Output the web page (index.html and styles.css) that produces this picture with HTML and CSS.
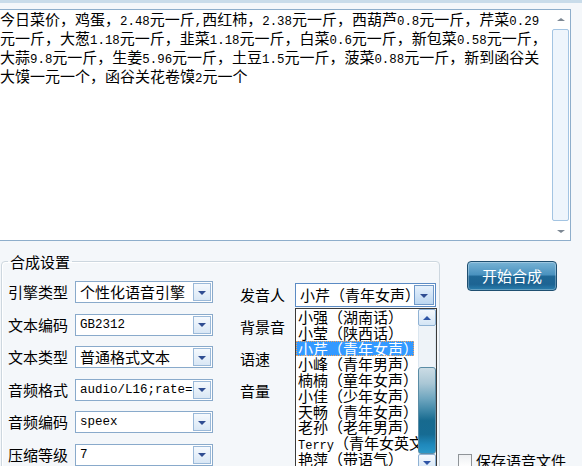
FILE: index.html
```html
<!DOCTYPE html>
<html lang="zh">
<head>
<meta charset="utf-8">
<title>合成设置</title>
<link rel="stylesheet" href="styles.css">
</head>
<body>
<div class="topband"></div>
<div class="editor">
  <div class="editor-text">今日菜价，鸡蛋，<span class="n">2.48</span>元一斤<span class="n">,</span>西红柿，<span class="n">2.38</span>元一斤，西葫芦<span class="n">0.8</span>元一斤，芹菜<span class="n">0.29</span><br>元一斤，大葱<span class="n">1.18</span>元一斤，韭菜<span class="n">1.18</span>元一斤，白菜<span class="n">0.6</span>元一斤，新包菜<span class="n">0.58</span>元一斤，<br>大蒜<span class="n">9.8</span>元一斤，生姜<span class="n">5.96</span>元一斤，土豆<span class="n">1.5</span>元一斤，菠菜<span class="n">0.88</span>元一斤，新到函谷关<br>大馍一元一个，函谷关花卷馍<span class="n">2</span>元一个</div>
  <div class="vscroll">
    <div class="vs-arrow vs-up"></div>
    <div class="vs-thumb"></div>
    <div class="vs-arrow vs-down"></div>
  </div>
</div>
<div class="bottom">
  <fieldset class="group">
    <legend>合成设置</legend>
    <div class="group-body">
      <div class="params">
        <span class="lbl">引擎类型</span>
        <div class="combo"><span class="val">个性化语音引擎</span><span class="dd"></span></div>
        <span class="lbl">文本编码</span>
        <div class="combo"><span class="val mono">GB2312</span><span class="dd"></span></div>
        <span class="lbl">文本类型</span>
        <div class="combo"><span class="val">普通格式文本</span><span class="dd"></span></div>
        <span class="lbl">音频格式</span>
        <div class="combo"><span class="val mono">audio/L16;rate=16000</span><span class="dd"></span></div>
        <span class="lbl">音频编码</span>
        <div class="combo"><span class="val mono">speex</span><span class="dd"></span></div>
        <span class="lbl">压缩等级</span>
        <div class="combo"><span class="val mono">7</span><span class="dd"></span></div>
      </div>
      <div class="voice">
        <span class="lbl">发音人</span>
        <div class="combo combo-open"><span class="val">小芹（青年女声）</span><span class="dd"></span></div>
        <span class="lbl">背景音</span><span></span>
        <span class="lbl">语速</span><span></span>
        <span class="lbl">音量</span><span></span>
      </div>
    </div>
  </fieldset>
  <div class="side">
    <button class="start" type="button">开始合成</button>
    <label class="save"><span class="box"></span>保存语音文件</label>
  </div>
  <div class="droplist">
    <ul class="items">
      <li>小强（湖南话）</li>
      <li>小莹（陕西话）</li>
      <li class="sel">小芹（青年女声）</li>
      <li>小峰（青年男声）</li>
      <li>楠楠（童年女声）</li>
      <li>小佳（少年女声）</li>
      <li>天畅（青年女声）</li>
      <li>老孙（老年男声）</li>
      <li><span class="mono-s">Terry</span>（青年女英文）</li>
      <li>艳萍（带语气）</li>
    </ul>
    <div class="lscroll">
      <div class="lbtn lup"></div>
      <div class="ltrack"></div>
      <div class="lthumb"></div>
      <div class="lbtn ldown"></div>
    </div>
  </div>
</div>
</body>
</html>
```
FILE: styles.css
```css
html, body {
  margin: 0;
  padding: 0;
  width: 582px;
  height: 466px;
  overflow: hidden;
}
body {
  background: #f4f7fa;
  font-family: "Noto Sans CJK SC", "Noto Sans", sans-serif;
  font-size: 15px;
  color: #000;
}
.topband {
  height: 3px;
  background: #c9dcea;
}
.editor {
  margin: 6px 0 0 -2px;
  width: 573px;
  height: 232px;
  box-sizing: border-box;
  border: 1px solid #8eaecb;
  background: #fff;
  display: flex;
}
.editor-text {
  flex: 1;
  min-width: 0;
  padding: 1px 0 0 1px;
  line-height: 15px;
  white-space: nowrap;
}
.n {
  font-family: "Liberation Mono", monospace;
  font-size: 12.4px;
}
.vscroll {
  width: 19px;
  flex: none;
  display: flex;
  flex-direction: column;
  background: #fff;
}
.vs-arrow {
  height: 18px;
  display: flex;
  align-items: center;
  justify-content: center;
}
.vs-up::after {
  content: "";
  border-left: 4px solid transparent;
  border-right: 4px solid transparent;
  border-bottom: 3px solid #7d8894;
}
.vs-down::after {
  content: "";
  border-left: 4px solid transparent;
  border-right: 4px solid transparent;
  border-top: 3px solid #7d8894;
}
.vs-thumb {
  flex: 1;
  margin: 1px 1px;
  border: 1px solid #a3c4e2;
  border-radius: 2px;
  background: #eef5fc;
}
.bottom {
  position: relative;
  display: flex;
  padding-top: 12px;
}
.group {
  margin: 0 0 0 1px;
  padding: 11px 2px 0 6px;
  width: 439px;
  height: 260px;
  box-sizing: border-box;
  border: 1px solid #cdd7df;
  border-radius: 4px;
  box-shadow: inset 1px 1px 0 #fff;
  min-width: 0;
}
.group legend {
  padding: 0 2px;
  line-height: 17px;
  font-size: 15px;
}
.group-body {
  display: flex;
}
.params {
  display: grid;
  grid-template-columns: 67px 138px;
  grid-auto-rows: 22px;
  row-gap: 10.6px;
  align-items: center;
}
.voice {
  display: grid;
  grid-template-columns: 55px 141px;
  grid-template-rows: 24px 24px 24px 24px;
  row-gap: 8px;
  align-items: center;
  margin: 2px 0 0 27px;
  align-self: flex-start;
}
.lbl {
  line-height: 18px;
  white-space: nowrap;
}
.combo {
  height: 22px;
  box-sizing: border-box;
  border: 1px solid #89aacb;
  background: #fff;
  display: flex;
  align-items: center;
  padding-left: 4px;
}
.val {
  flex: 1;
  overflow: hidden;
  white-space: nowrap;
  line-height: 18px;
}
.mono {
  font-family: "Liberation Mono", monospace;
  font-size: 12.5px;
}
.mono-s {
  font-family: "Liberation Mono", monospace;
  font-size: 12px;
}
.dd {
  width: 18px;
  height: 18px;
  margin-right: 1px;
  box-sizing: border-box;
  border: 1px solid #9ab9d9;
  background: linear-gradient(#f5f9fd, #d9e7f5);
  display: flex;
  align-items: center;
  justify-content: center;
  flex: none;
}
.dd::after {
  content: "";
  margin-top: 1px;
  border-left: 4.5px solid transparent;
  border-right: 4.5px solid transparent;
  border-top: 4px solid #2f4d92;
}
.combo-open {
  height: 24px;
  border-color: #5b8bc4;
}
.combo-open .dd {
  width: 20px;
  height: 20px;
  border-color: #6f98c8;
  background: linear-gradient(#e6f1fc, #bcd7f1);
}
.side {
  display: flex;
  flex-direction: column;
  align-items: flex-start;
}
.start {
  margin: 8px 0 0 27px;
  width: 90px;
  height: 30px;
  border: 1px solid #1f4f70;
  border-radius: 4px;
  background: linear-gradient(#78b3d5 0%, #4a92bf 45%, #1f6795 52%, #1d6493 80%, #2a7fae 100%);
  box-shadow: inset 0 0 0 1px rgba(255, 255, 255, 0.28);
  color: #fff;
  font-family: "Noto Sans CJK SC", sans-serif;
  font-size: 15px;
  line-height: 20px;
  padding: 0;
}
.save {
  margin: 162px 0 0 18px;
  display: flex;
  align-items: center;
  white-space: nowrap;
  line-height: 16px;
}
.box {
  width: 14px;
  height: 14px;
  box-sizing: border-box;
  border: 1px solid #8f9498;
  background: linear-gradient(#eef0f2, #fff);
  margin-right: 4px;
}
.droplist {
  position: absolute;
  left: 295px;
  top: 67px;
  width: 142px;
  height: 175px;
  box-sizing: border-box;
  border: 1px solid #3a3a3a;
  background: #fff;
  display: flex;
}
.items {
  flex: 1;
  min-width: 0;
  margin: 0;
  padding: 0;
  list-style: none;
  overflow: hidden;
}
.items li {
  height: 15.75px;
  line-height: 15.75px;
  padding-left: 2px;
  white-space: nowrap;
}
.items li.sel {
  background: #3399ff;
  color: #fff;
  outline: 1px dotted #f2a35a;
  outline-offset: -1px;
  margin-right: 4px;
}
.lscroll {
  width: 18px;
  flex: none;
  display: flex;
  flex-direction: column;
  background: #eef3f8;
}
.lbtn {
  height: 17px;
  flex: none;
  box-sizing: border-box;
  border: 1px solid #8fb2d4;
  border-radius: 2px;
  background: linear-gradient(#f4f8fd, #d4e5f5);
  display: flex;
  align-items: center;
  justify-content: center;
}
.lup::after {
  content: "";
  border-left: 4.5px solid transparent;
  border-right: 4.5px solid transparent;
  border-bottom: 4px solid #2f55a6;
}
.ldown::after {
  content: "";
  border-left: 4.5px solid transparent;
  border-right: 4.5px solid transparent;
  border-top: 4px solid #2f55a6;
}
.ltrack {
  height: 41px;
  flex: none;
  border-left: 1px solid #dbe6ef;
  border-right: 1px solid #dbe6ef;
}
.lthumb {
  height: 87px;
  flex: none;
  box-sizing: border-box;
  border: 1px solid #5a8ca5;
  border-radius: 3px;
  background: linear-gradient(#cbdce5 0%, #aac7d5 18%, #6fa6bf 36%, #3f87a7 50%, #176a8f 62%, #166b93 78%, #1f88bb 90%, #2a98c9 100%);
}
```
